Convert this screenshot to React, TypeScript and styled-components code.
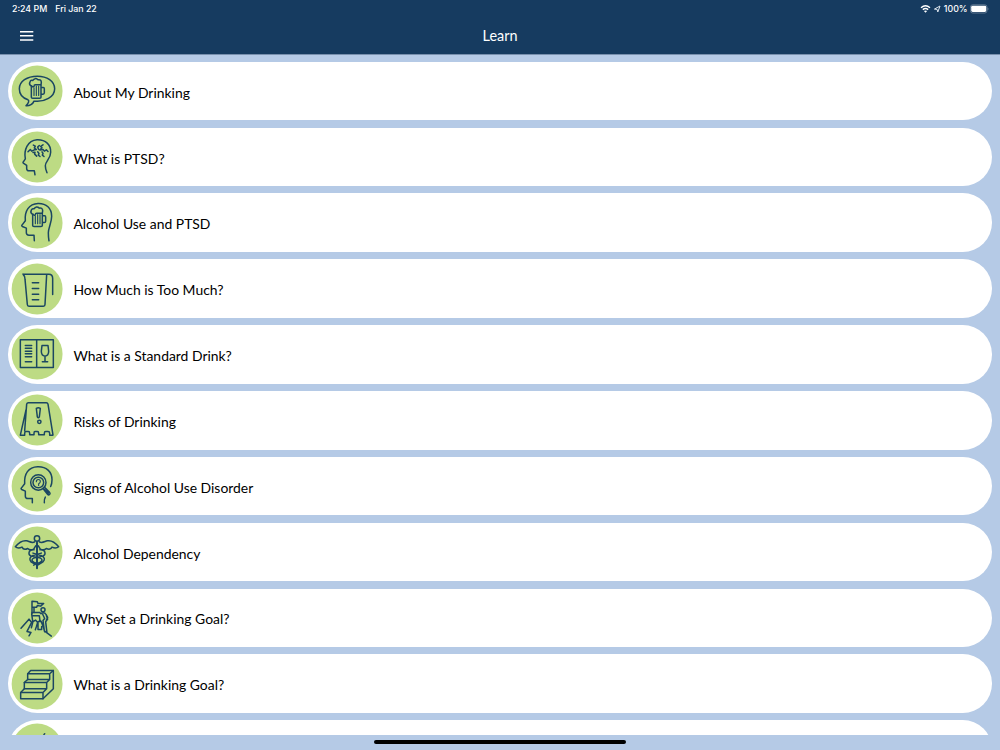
import * as React from "react";
import styled, { createGlobalStyle } from "styled-components";

const GlobalStyle = createGlobalStyle`
  body {
    margin: 0;
    overflow: hidden;
  }
`;

const Screen = styled.div`
  background-color: #b5cae6;
  box-sizing: border-box;
  color: #000;
  display: flex;
  flex-direction: column;
  font-family: Lato, "Open Sans", sans-serif;
  height: 750px;
  overflow: hidden;
  width: 1000px;
`;

const Header = styled.header`
  background-color: #163b60;
  border-bottom: 1px solid #7890ae;
  color: white;
  flex: none;
  height: 54px;
`;

const StatusBar = styled.div`
  align-items: center;
  box-sizing: border-box;
  display: flex;
  font-family: Inter, Roboto, sans-serif;
  font-size: 8.8px;
  font-weight: 500;
  height: 18px;
  justify-content: space-between;
  line-height: 18px;
  padding: 0 11.4px 0 12px;
`;

const StatusGroup = styled.div<{ $gap: number }>`
  align-items: center;
  display: flex;
  gap: ${({ $gap }) => $gap}px;
`;

const StatusIcons = styled.svg`
  display: block;
`;

const NavBar = styled.div`
  align-items: center;
  display: grid;
  grid-template-columns: 1fr auto 1fr;
  height: 35px;
  padding: 0 20px;
`;

const MenuButton = styled.button`
  background: none;
  border: 0;
  height: 12px;
  padding: 0;
  width: 14px;
`;

const MenuIcon = styled.svg`
  display: block;
  stroke: white;
  stroke-width: 1.5;
`;

const Title = styled.h1`
  font-size: 14.4px;
  font-weight: 400;
  line-height: 20px;
  margin: 0;
  padding-top: 0.6px;
`;

const TopicList = styled.main`
  box-sizing: border-box;
  display: flex;
  flex: 1;
  flex-direction: column;
  gap: 7.35px;
  min-height: 0;
  overflow: hidden;
  padding: 6.8px 7.8px 0 8px;
`;

const TopicRow = styled.div`
  align-items: center;
  background-color: white;
  border-radius: 29.25px;
  box-sizing: border-box;
  display: flex;
  flex: none;
  height: 58.5px;
  padding-left: 3px;
`;

const TopicDrawing = styled.svg`
  display: block;
  fill: none;
  flex: none;
  height: 52px;
  stroke: #1b4762;
  stroke-linecap: round;
  stroke-linejoin: round;
  stroke-width: 4.5;
  width: 52px;
`;

const TopicLabel = styled.span`
  font-size: 13.91px;
  line-height: 20px;
  padding: 3.4px 0 0 10.4px;
`;

const HomeBar = styled.footer`
  box-sizing: border-box;
  display: flex;
  flex: none;
  height: 15px;
  justify-content: center;
  padding-top: 5px;
`;

const HomeIndicator = styled.div`
  background-color: black;
  border-radius: 2px;
  height: 4px;
  width: 252px;
`;

const Mug = () => (
  <>
    <path d="M78 82Q71 77 75 70Q77 64 83 66Q90 56 99 64Q109 62 109 72L108 79H91Q87 79 87 84Q83 87 80 82" />
    <path d="M79 84V116Q79 119 83 119H104Q108 119 108 116V80M108 87H115Q118 87 118 91V103Q118 107 114 107H108" />
    <path d="M87 88V111M94 83V111M101 83V111" strokeWidth="3.4" />
  </>
);

const SpeechMug = () => (
  <>
    <path d="M87 128C120 132 149 115 149 91C149 68 126 53 97 53C66 53 43 69 43 91C43 106 53 119 69 124C74 127 70 134 63 142C74 143 84 136 87 128Z" />
    <Mug />
  </>
);

const StressedHead = () => (
  <>
    <path d="M90 151L88 139H72Q65 139 65 132V123L55 116Q53 114 55 112L61 103C56 78 67 48 96 46C122 45 138 61 137 83C137 104 121 110 121 124Q121 134 126 145" />
    <path d="M69 82L76 75L80 80L88 76H91M85 62L91 65L88 70L94 75M101 75L98 68L103 63M114 61L107 66L111 70L105 76M105 77L114 75L118 80L124 76L129 81M84 84L90 83L89 89L95 95M98 82L102 87L100 92L105 96M111 82L114 87L112 92L117 96" />
  </>
);

const MugHead = () => (
  <>
    <path d="M88 151L87 134H72Q64 134 64 127V113L52 108Q49 106 51 104L61 91C58 62 72 40 99 39C124 38 140 54 140 77C140 97 130 111 130 127Q130 141 132 151" />
    <g transform="translate(4 -11)">
      <Mug />
    </g>
  </>
);

const MeasuringJug = () => (
  <>
    <path d="M54 53H132Q143 53 143 66V114M54 53Q60 59 60 68L67 144Q67 149 72 149H115Q120 149 120 144L125 54" />
    <path d="M82 79H101M82 96H101M82 113H101M82 130H101" />
  </>
);

const DrinkMenu = () => (
  <>
    <path d="M46 55H145V138H46ZM95 55V138" />
    <path d="M61 72H80M61 80H80M61 89H80M61 97H80M61 106H80M61 121H80M111 72H129L131 89Q131 102 120 104Q109 102 109 89ZM120 104V121M112 121H128" />
  </>
);

const CautionSign = () => (
  <>
    <path d="M59 130L65 50Q66 46 70 46H124Q128 46 129 50L144 143H134V137Q134 132 129 132H122Q118 132 118 137V142H101V137Q101 132 97 132H90Q87 132 87 137V142H74V137Q74 132 70 132H63Q59 132 59 137V143H46L63 67" />
    <path d="M94 63Q100 59 106 63L103 88Q100 93 97 88Z" />
    <circle cx="103" cy="103" r="5" />
  </>
);

const MagnifiedHead = () => (
  <>
    <path d="M82 148V135H69Q61 135 61 128V113L50 108Q47 106 49 104L59 91C57 61 70 41 98 40C124 39 141 55 141 79Q141 91 137 99M121 131Q117 137 118 148" />
    <circle cx="100" cy="87" r="23" />
    <circle cx="100" cy="87" r="16" />
    <path d="M94 85Q94 78 100 78Q106 78 106 84Q106 88 101 91V96" strokeWidth="3.3" />
    <path d="M114 105L127 122Q130 126 134 123Q137 120 133 116L118 101M118 108L130 119" />
  </>
);

const Caduceus = () => (
  <>
    <circle cx="96" cy="57" r="8" />
    <path d="M96 69V146" strokeWidth="6" />
    <path d="M89 67C82 72 75 67 65 64Q48 61 31 82Q39 89 51 83Q56 93 68 87Q75 94 86 89L92 79M103 67C110 72 117 67 127 64Q144 61 161 82Q153 89 141 83Q136 93 124 87Q117 94 106 89L100 79" />
    <path d="M87 91C69 89 68 107 80 110L106 116Q116 121 106 128L86 137M105 91C123 89 124 107 112 110L86 116Q76 121 86 128L96 132M84 101L110 109Q124 116 114 127L98 137M109 101L84 108Q69 115 78 127L91 135" />
  </>
);

const SummitClimbers = () => (
  <>
    <path d="M81 85V47L97 49L99 54H116L107 62L97 60L95 65H82M87 66V81M48 128L72 101L80 111L66 138L78 141L72 151" />
    <circle cx="114" cy="73" r="6" />
    <path d="M81 81H104L108 85M80 85L83 107L80 124M84 91H103L105 106M109 83Q119 79 123 87L128 96L124 104M112 84L119 99L114 105L118 136L127 143L139 152M79 127L84 108L92 104L98 111L94 124L91 133M100 108L108 107L115 124L119 139M99 112V132H110V123M124 90L128 101L122 109L126 142" />
  </>
);

const Steps = () => (
  <>
    <path d="M77 57H145V112L114 142H47V123L58 112V93L68 84V67Z" />
    <path d="M145 57L134 67V84L125 93V112L114 123V142M68 67H134M68 84H134M58 93H125M58 112H125M47 123H114" />
  </>
);

const PartialTopic = () => <path d="M117 54L119 52" />;

const topics = [
  { label: "About My Drinking", Drawing: SpeechMug },
  { label: "What is PTSD?", Drawing: StressedHead },
  { label: "Alcohol Use and PTSD", Drawing: MugHead },
  { label: "How Much is Too Much?", Drawing: MeasuringJug },
  { label: "What is a Standard Drink?", Drawing: DrinkMenu },
  { label: "Risks of Drinking", Drawing: CautionSign },
  { label: "Signs of Alcohol Use Disorder", Drawing: MagnifiedHead },
  { label: "Alcohol Dependency", Drawing: Caduceus },
  { label: "Why Set a Drinking Goal?", Drawing: SummitClimbers },
  { label: "What is a Drinking Goal?", Drawing: Steps },
  { label: "", Drawing: PartialTopic },
];

export default function App() {
  return (
    <Screen>
      <GlobalStyle />
      <Header>
        <StatusBar>
          <StatusGroup $gap={8}>
            <span>2:24 PM</span>
            <span>Fri Jan 22</span>
          </StatusGroup>
          <StatusGroup $gap={2}>
            <StatusIcons width="22" height="10" viewBox="0 0 22 10" fill="none">
              <path
                d="M1 3.7Q5.5 -.2 10 3.7M2.8 5.6Q5.5 3.3 8.2 5.6"
                stroke="white"
                strokeWidth="1.4"
              />
              <path d="M3.9 7Q5.5 5.8 7.1 7L5.5 8.7Z" fill="white" />
              <path
                d="M14.4 5.1L20 2L17.8 8L17.1 5.4Z"
                stroke="#dce5ee"
                strokeWidth="1"
              />
            </StatusIcons>
            <span>100%</span>
            <StatusIcons width="19" height="10" viewBox="0 0 19 10">
              <rect x=".4" y=".8" width="16.6" height="8.2" rx="2.3" fill="none" stroke="#71879d" strokeWidth=".8" />
              <rect x="1.2" y="1.8" width="15" height="6.2" rx="1.4" fill="white" />
              <path d="M17.6 3.5Q19.4 4.9 17.6 6.3Z" fill="#71879d" />
            </StatusIcons>
          </StatusGroup>
        </StatusBar>
        <NavBar>
          <MenuButton aria-label="Menu">
            <MenuIcon width="14" height="12" viewBox="0 0 14 12">
              <path d="M0 1.8H13.3M0 5.8H13.3M0 9.9H13.3" />
            </MenuIcon>
          </MenuButton>
          <Title>Learn</Title>
        </NavBar>
      </Header>
      <TopicList>
        {topics.map(({ label, Drawing }) => (
          <TopicRow key={label}>
            <TopicDrawing viewBox="18 19.6 156 156">
              <circle cx="96.3" cy="97.6" r="76.4" fill="#bddb84" stroke="none" />
              <Drawing />
            </TopicDrawing>
            <TopicLabel>{label}</TopicLabel>
          </TopicRow>
        ))}
      </TopicList>
      <HomeBar>
        <HomeIndicator />
      </HomeBar>
    </Screen>
  );
}
